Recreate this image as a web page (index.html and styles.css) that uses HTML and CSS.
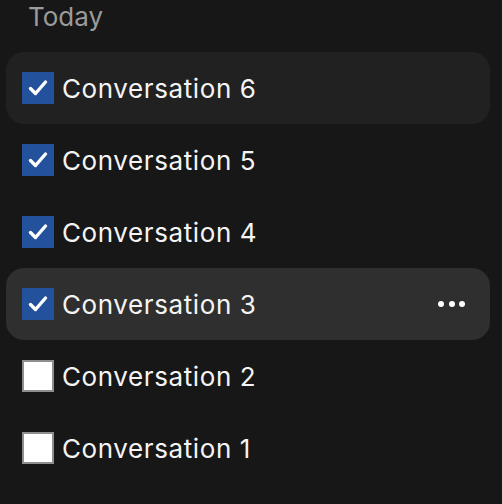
FILE: index.html
```html
<!DOCTYPE html>
<html>
<head>
<meta charset="utf-8">
<link rel="stylesheet" href="styles.css">
</head>
<body>
<div class="sidebar">
  <div class="section-title">Today</div>
  <ul class="list">
    <li class="item selected">
      <span class="check on"><svg viewBox="0 0 32 32" width="32" height="32"><path d="M8.5 16.5 L13.5 21.5 L23.5 10" fill="none" stroke="#fff" stroke-width="3.4" stroke-linecap="round" stroke-linejoin="round"/></svg></span>
      <span class="label">Conversation 6</span>
    </li>
    <li class="item">
      <span class="check on"><svg viewBox="0 0 32 32" width="32" height="32"><path d="M8.5 16.5 L13.5 21.5 L23.5 10" fill="none" stroke="#fff" stroke-width="3.4" stroke-linecap="round" stroke-linejoin="round"/></svg></span>
      <span class="label">Conversation 5</span>
    </li>
    <li class="item">
      <span class="check on"><svg viewBox="0 0 32 32" width="32" height="32"><path d="M8.5 16.5 L13.5 21.5 L23.5 10" fill="none" stroke="#fff" stroke-width="3.4" stroke-linecap="round" stroke-linejoin="round"/></svg></span>
      <span class="label">Conversation 4</span>
    </li>
    <li class="item hover">
      <span class="check on"><svg viewBox="0 0 32 32" width="32" height="32"><path d="M8.5 16.5 L13.5 21.5 L23.5 10" fill="none" stroke="#fff" stroke-width="3.4" stroke-linecap="round" stroke-linejoin="round"/></svg></span>
      <span class="label">Conversation 3</span>
      <span class="more"><i></i><i></i><i></i></span>
    </li>
    <li class="item">
      <span class="check off"></span>
      <span class="label">Conversation 2</span>
    </li>
    <li class="item">
      <span class="check off"></span>
      <span class="label">Conversation 1</span>
    </li>
  </ul>
</div>
</body>
</html>
```
FILE: styles.css
```css
html, body {
  margin: 0;
  padding: 0;
  background: #171717;
}
body {
  font-family: Inter, "Noto Sans", sans-serif;
  color: #ececec;
  width: 502px;
  height: 504px;
  overflow: hidden;
}
.sidebar {
  padding: 0 12px 0 6px;
}
.section-title {
  height: 52px;
  box-sizing: border-box;
  padding: 0 0 0 22px;
  font-size: 26px;
  line-height: 34px;
  color: #9b9b9b;
}
.list {
  list-style: none;
  margin: 0;
  padding: 0;
}
.item {
  display: flex;
  align-items: center;
  height: 72px;
  padding: 0 16px;
  border-radius: 18px;
  box-sizing: border-box;
}
.item.selected {
  background: #212121;
}
.item.hover {
  background: #2f2f2f;
}
.check {
  width: 32px;
  height: 32px;
  box-sizing: border-box;
  flex: none;
  display: block;
}
.check svg { display: block; }
.check.on {
  background: #23519b;
}
.check.off {
  background: #ffffff;
  border: 2px solid #8f8f8f;
}
.label {
  margin-left: 8px;
  font-size: 26px;
  letter-spacing: 0.6px;
  color: #f4f4f4;
  flex: 1;
}
.more {
  display: flex;
  gap: 4.5px;
  margin-right: 9px;
}
.more i {
  width: 6px;
  height: 6px;
  border-radius: 50%;
  background: #fff;
  display: block;
}
```
